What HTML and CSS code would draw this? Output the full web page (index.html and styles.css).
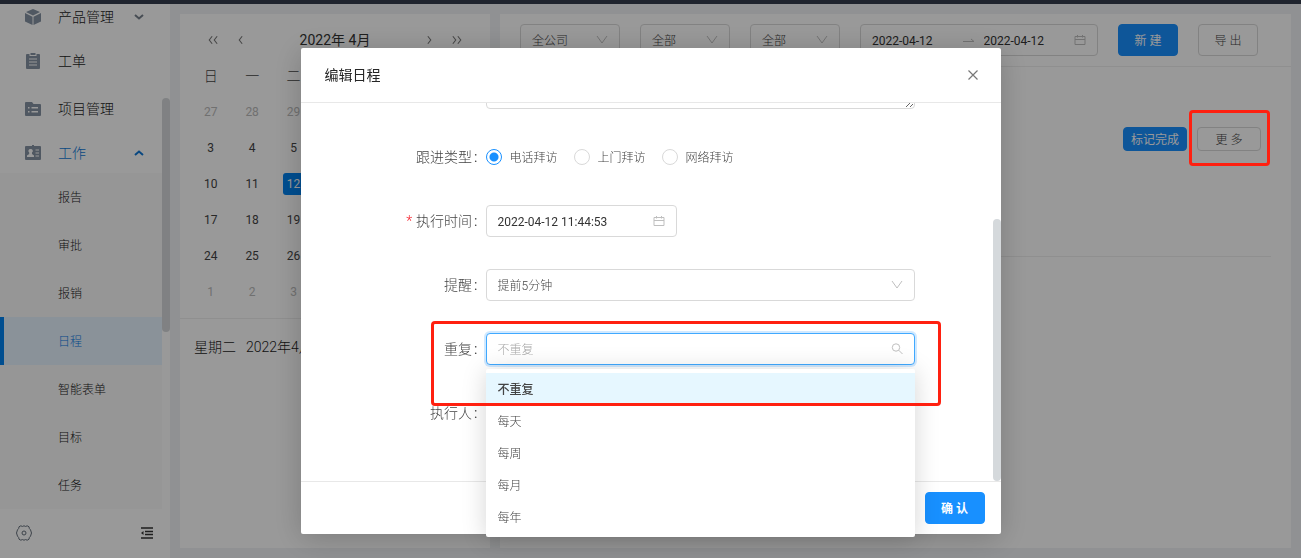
FILE: index.html
```html
<!DOCTYPE html>
<html lang="zh-CN">
<head>
<meta charset="utf-8">
<title>编辑日程</title>
<link rel="stylesheet" href="styles.css">
</head>
<body>
<svg class="defs" aria-hidden="true">
  <symbol id="down" viewBox="0 0 12 12"><path d="M1 2l5 7 5-7" fill="none" stroke="currentColor"/></symbol>
  <symbol id="calendar" viewBox="0 0 12 12"><path d="M1 2.500h10v8H1zM1 5.500h10M3.500 1v2.500M8.500 1v2.500" fill="none" stroke="currentColor"/></symbol>
  <symbol id="left" viewBox="0 0 6 10"><path d="M5 .5L1.500 5 5 9.500" fill="none" stroke="currentColor" stroke-width="1.300"/></symbol>
  <symbol id="right" viewBox="0 0 6 10"><path d="M1 .5L4.500 5 1 9.500" fill="none" stroke="currentColor" stroke-width="1.300"/></symbol>
</svg>
<div class="app">
  <header class="topbar"></header>
  <div class="layout">
    <aside class="sidebar">
      <div class="menu-area">
        <nav class="menu">
          <a class="menu-title" href="#">
            <svg class="menu-icon" viewBox="0 0 16 16"><path d="M8 0l7 3-7 3.500L1 3zM0 4l7.500 3.700V16L0 12.500zM16 4L8.500 7.700V16l7.500-3.500z" fill="currentColor"/></svg>
            <span>产品管理</span>
            <svg class="caret" viewBox="0 0 10 6"><path d="M1 1l4 3.500L9 1" fill="none" stroke="currentColor" stroke-width="2"/></svg>
          </a>
          <a class="menu-item" href="#">
            <svg class="menu-icon" viewBox="0 0 16 16"><path fill-rule="evenodd" d="M2 1h2.500v2h7V1H14q1 0 1 1v13q0 1-1 1H2q-1 0-1-1V2q0-1 1-1zM4 5.500v1h8v-1zm0 3v1h8v-1zm0 3v1h8v-1zM5.500 0h5v2h-5z" fill="currentColor"/></svg>
            <span>工单</span>
          </a>
          <a class="menu-item" href="#">
            <svg class="menu-icon" viewBox="0 0 16 16"><path fill-rule="evenodd" d="M1 1h6l1.500 2H15q1 0 1 1v10q0 1-1 1H1q-1 0-1-1V2q0-1 1-1zM3 6v1.500h1.500V6zm3.500 0v1.500H13V6zM3 10v1.500h1.500V10zm3.500 0v1.500H13V10z" fill="currentColor"/></svg>
            <span>项目管理</span>
          </a>
          <a class="menu-title open" href="#">
            <svg class="menu-icon" viewBox="0 0 16 16"><path fill-rule="evenodd" d="M1 1h6V0h2v1h6q1 0 1 1v12q0 1-1 1H1q-1 0-1-1V2q0-1 1-1zm4.500 3a2 2 0 0 0-1.300 3.600V9L2 10.500V12h7v-1.500L7 9V7.600A2 2 0 0 0 5.500 4zM10.500 4.500v1H14v-1zm0 3v1H14v-1zm0 3v1H14v-1z" fill="currentColor"/></svg>
            <span>工作</span>
            <svg class="caret" viewBox="0 0 10 6"><path d="M1 5l4-3.500L9 5" fill="none" stroke="currentColor" stroke-width="2"/></svg>
          </a>
          <div class="submenu">
            <a href="#">报告</a>
            <a href="#">审批</a>
            <a href="#">报销</a>
            <a class="active" href="#">日程</a>
            <a href="#">智能表单</a>
            <a href="#">目标</a>
            <a href="#">任务</a>
          </div>
        </nav>
        <div class="rail"><div class="thumb"></div></div>
      </div>
      <div class="sidebar-foot">
        <button aria-label="设置"><svg width="16" height="16" viewBox="0 0 16 16" fill="none" stroke="#66707c"><path d="M4.800.8q1.600 1.300 3.200 0 1.600 1.300 3.200 0l1.800 1q0 2 1.500 3l1 3.200-1 3.200q-1.500 1-1.500 3l-1.800 1q-1.600-1.300-3.200 0-1.600-1.300-3.200 0l-1.800-1q0-2-1.500-3L.5 8l1-3.200q1.500-1 1.500-3z"/><circle cx="8" cy="8" r="2"/></svg></button>
        <button aria-label="收起菜单"><svg width="14" height="12" viewBox="0 0 14 12"><path d="M1 1h12M5 4.500h8M5 7.500h8M1 11h12" stroke="#333" stroke-width="1.300"/><path d="M3.500 4v4L1 6z" fill="#333"/></svg></button>
      </div>
    </aside>
    <main class="content">
      <section class="calendar card">
        <div class="cal-head">
          <button aria-label="上一年"><svg><use href="#left"/></svg><svg><use href="#left"/></svg></button>
          <button aria-label="上个月"><svg><use href="#left"/></svg></button>
          <h2>2022年 4月</h2>
          <button aria-label="下个月"><svg><use href="#right"/></svg></button>
          <button aria-label="下一年"><svg><use href="#right"/></svg><svg><use href="#right"/></svg></button>
        </div>
        <table class="days">
          <thead><tr><th>日</th><th>一</th><th>二</th><th>三</th><th>四</th><th>五</th><th>六</th></tr></thead>
          <tbody>
            <tr class="muted"><td>27</td><td>28</td><td>29</td><td>30</td><td>31</td><td>1</td><td>2</td></tr>
            <tr><td>3</td><td>4</td><td>5</td><td>6</td><td>7</td><td>8</td><td>9</td></tr>
            <tr><td>10</td><td>11</td><td><span class="today">12<i class="badge"></i></span></td><td>13</td><td>14</td><td>15</td><td>16</td></tr>
            <tr><td>17</td><td>18</td><td>19</td><td>20</td><td>21</td><td>22</td><td>23</td></tr>
            <tr><td>24</td><td>25</td><td>26</td><td>27</td><td>28</td><td>29</td><td>30</td></tr>
            <tr class="muted"><td>1</td><td>2</td><td>3</td><td>4</td><td>5</td><td>6</td><td>7</td></tr>
          </tbody>
        </table>
        <p class="cal-date"><span>星期二</span><span>2022年4月12日</span></p>
      </section>
      <section class="schedule card">
        <div class="toolbar">
          <div class="picker wide"><select aria-label="公司"><option>全公司</option></select><svg><use href="#down"/></svg></div>
          <div class="picker"><select aria-label="类型"><option>全部</option></select><svg><use href="#down"/></svg></div>
          <div class="picker"><select aria-label="状态"><option>全部</option></select><svg><use href="#down"/></svg></div>
          <div class="picker range">
            <input aria-label="开始日期" value="2022-04-12">
            <svg viewBox="0 0 12 12"><path d="M0 7.500h11L8 5" fill="none" stroke="currentColor"/></svg>
            <input aria-label="结束日期" value="2022-04-12">
            <svg><use href="#calendar"/></svg>
          </div>
          <button class="btn primary">新 建</button>
          <button class="btn">导 出</button>
        </div>
        <div class="entry">
          <button class="btn primary small">标记完成</button>
          <button class="btn small">更 多</button>
        </div>
      </section>
    </main>
  </div>
</div>
<div class="mask">
  <div class="modal" role="dialog" aria-labelledby="dialog-title">
    <header class="modal-head">
      <h1 id="dialog-title">编辑日程</h1>
      <button aria-label="关闭"><svg width="10" height="10" viewBox="0 0 10 10"><path d="M.5.5l9 9M9.500.5l-9 9" stroke="currentColor" stroke-width="1.200"/></svg></button>
    </header>
    <div class="modal-body">
      <form class="form">
        <div class="row"><span class="label"></span><textarea class="field" aria-label="日程内容"></textarea></div>
        <div class="row"><span class="label">跟进类型<b>:</b></span>
          <div class="field radios">
            <label><input type="radio" name="kind" checked><span>电话拜访</span></label>
            <label><input type="radio" name="kind"><span>上门拜访</span></label>
            <label><input type="radio" name="kind"><span>网络拜访</span></label>
          </div>
        </div>
        <div class="row"><label class="label required" for="time">执行时间<b>:</b></label>
          <div class="field"><div class="picker time"><input id="time" value="2022-04-12 11:44:53"><svg><use href="#calendar"/></svg></div></div>
        </div>
        <div class="row"><label class="label" for="remind">提醒<b>:</b></label>
          <div class="field picker"><select id="remind"><option>提前5分钟</option></select><svg><use href="#down"/></svg></div>
        </div>
        <div class="row"><label class="label" for="repeat">重复<b>:</b></label>
          <div class="field picker focused"><input id="repeat" role="combobox" aria-expanded="true" aria-controls="repeat-list" placeholder="不重复"><svg viewBox="0 0 12 12" fill="none" stroke="currentColor"><circle cx="5" cy="4.500" r="3.700"/><path d="M7.700 7.200l3.800 3.800"/></svg></div>
        </div>
        <div class="row"><span class="label">执行人<b>:</b></span><div class="field"></div></div>
      </form>
      <div class="rail"><div class="thumb"></div></div>
    </div>
    <footer class="modal-foot"><button class="btn primary strong">确 认</button></footer>
    <ul class="dropdown" id="repeat-list" role="listbox">
      <li role="option" aria-selected="true">不重复</li>
      <li role="option">每天</li>
      <li role="option">每周</li>
      <li role="option">每月</li>
      <li role="option">每年</li>
    </ul>
    <div class="highlight repeat-mark"></div>
  </div>
</div>
<div class="highlight more-mark"></div>
</body>
</html>
```
FILE: styles.css
```css
* { box-sizing: border-box; }
body {
  margin: 0;
  font: 300 12px/20px Roboto, "Noto Sans CJK SC", sans-serif;
  color: #444;
  overflow: hidden;
}
h1, h2, p, ul { margin: 0; padding: 0; }
button, input, select, textarea { font: inherit; color: inherit; }
button { border: 0; background: none; padding: 0; cursor: pointer; }
a { color: inherit; text-decoration: none; }
.defs { position: absolute; width: 0; height: 0; }

.app { display: flex; flex-direction: column; height: 100vh; background: #f0f2f5; }
.topbar { flex: none; height: 4px; background: #353d4e; }
.layout { display: flex; flex: 1; min-height: 0; }

.sidebar { display: flex; flex-direction: column; width: 170px; background: #fff; }
.menu-area { display: flex; flex: 1; min-height: 0; }
.menu { flex: 1; display: flex; flex-direction: column; justify-content: flex-end; overflow: hidden; }
.menu-title, .menu-item {
  display: flex; flex: none; align-items: center;
  height: 48px; padding: 0 18px 0 25px; gap: 17px;
  font-size: 14px; color: #222;
}
.menu-title { height: 40px; }
.menu-icon { width: 16px; height: 16px; color: #8593a3; }
.caret { width: 10px; height: 6px; margin-left: auto; color: #77818c; }
.open, .open .caret { color: #1078d8; }
.submenu { flex: none; background: #fafafa; }
.submenu a { display: flex; align-items: center; height: 48px; padding: 2px 0 0 58px; color: #222; }
.submenu .active { padding-left: 54px; border-left: 4px solid #0082f0; background: #e6f3ff; color: #0a7ae6; }
.rail { flex: none; width: 8px; }
.thumb { border-radius: 4px; }
.menu-area .thumb { height: 234px; margin-top: 94px; background: #d5d8db; }
.sidebar-foot { display: flex; flex: none; align-items: center; justify-content: space-between; height: 49px; padding: 0 16px 2px; }
.sidebar-foot svg { display: block; }

.content { display: flex; flex: 1; gap: 10px; padding: 10px; min-width: 0; }
.card { background: #fff; }
.calendar { width: 310px; flex: none; }
.cal-head { display: flex; align-items: center; height: 43px; padding: 9px 28px 0; gap: 20px; }
.cal-head h2 { flex: 1; text-align: center; font-size: 14px; font-weight: 400; color: #333; }
.cal-head button { display: flex; color: #777; }
.cal-head svg { width: 5px; height: 10px; }
.days { width: 290px; margin: 0 10px; table-layout: fixed; border-collapse: collapse; text-align: center; font-weight: 400; color: #444; }
.days th, .days td { height: 36px; padding: 2px 0 0; }
.days th { font-size: 14px; font-weight: 300; color: #444; }
.days .muted { color: #bbb; }
.today { display: block; position: relative; width: 22px; margin: auto; line-height: 22px; border-radius: 3px; background: #0082f0; color: #fff; }
.badge { position: absolute; top: -4px; right: -4px; width: 8px; height: 8px; border-radius: 50%; background: #f5222d; }
.cal-date { display: flex; gap: 10px; margin-top: 9px; padding: 18px 14px; border-top: 1px solid #eee; font-size: 14px; color: #222; }

.schedule { flex: 1; min-width: 0; }
.toolbar { display: flex; gap: 20px; padding: 10px 20px; height: 53px; border-bottom: 1px solid #eee; }
.picker {
  display: flex; align-items: center; width: 90px; height: 32px; padding: 0 11px;
  border: 1px solid #d9d9d9; border-radius: 4px; background: #fff;
}
.picker select, .picker input { flex: 1; min-width: 0; padding: 2px 0 0; border: 0; outline: 0; background: none; appearance: none; }
.picker svg { flex: none; width: 12px; height: 12px; color: #bfbfbf; }
.picker.wide { width: 100px; }
.picker.range { width: 238px; gap: 9px; color: #333; }
.picker input { font-weight: 400; }
.btn { height: 32px; padding: 2px 16px 0; border: 1px solid #d9d9d9; border-radius: 4px; background: #fff; color: #444; white-space: nowrap; }
.toolbar .btn { width: 60px; padding: 2px 0 0; }
.btn.primary { border-color: #1890ff; background: #1890ff; color: #fff; font-weight: 400; }
.btn.strong { width: 60px; padding: 2px 0 0; font-weight: 700; }
.entry { display: flex; justify-content: flex-end; gap: 10px; height: 190px; margin: 0 20px; padding: 60px 10px; border-bottom: 1px solid #eee; }
.btn.small { width: 64px; height: 24px; padding: 2px 0 0; line-height: 20px; }

.mask { position: fixed; inset: 0; padding-top: 48px; background: rgba(0, 0, 0, .4); }
.modal { position: relative; width: 700px; margin: 0 auto; border-radius: 2px; background: #fff; box-shadow: 0 4px 30px rgba(0, 0, 0, .2); }
.modal-head { display: flex; align-items: center; justify-content: space-between; height: 55px; padding: 0 23px 0 24px; border-bottom: 1px solid #e8e8e8; }
.modal-head h1 { font-size: 14px; font-weight: 400; color: #262626; }
.modal-head button { display: flex; color: #777; }
.modal-body { display: flex; height: calc(100vh - 180px); overflow: hidden; }
.form { flex: 1; display: flex; flex-direction: column; justify-content: flex-end; gap: 32px; padding: 0 24px 52px; }
.row { display: flex; flex: none; align-items: center; min-height: 32px; }
.label { width: 25%; padding-right: 8px; text-align: right; font-size: 14px; color: #444; }
.label b { margin-left: 2px; font-weight: 400; }
.required::before { content: "*"; margin-right: 4px; color: #f5222d; }
.field, .field.picker { width: 66.66%; }
textarea.field { height: 54px; border: 1px solid #d9d9d9; border-radius: 4px; resize: vertical; }
.radios { display: flex; gap: 16px; }
.radios label { display: flex; align-items: center; gap: 8px; }
.radios span { padding-top: 2px; }
.radios input { appearance: none; width: 16px; height: 16px; margin: 0; border: 1px solid #d9d9d9; border-radius: 50%; }
.radios input:checked { border-color: #1890ff; background: radial-gradient(circle, #1890ff 4px, #fff 5px); }
.picker.time { width: 191px; color: #333; }
.focused { border-color: #40a9ff; box-shadow: 0 0 0 2px rgba(24, 144, 255, .2); }
.focused input::placeholder { color: #aaa; font-weight: 300; }
.modal .modal-body .thumb { height: 262px; margin-top: 116px; background: #d5d9dc; }
.modal-foot { display: flex; justify-content: flex-end; padding: 10px 16px; border-top: 1px solid #e8e8e8; }
.dropdown { position: absolute; left: 185px; top: 321px; width: 429px; padding: 4px 0; list-style: none; border-radius: 2px; background: #fff; box-shadow: 0 2px 24px rgba(0, 0, 0, .17); }
.dropdown li { padding: 7px 12px 5px; }
.dropdown li[aria-selected] { background: #e6f7ff; font-weight: 500; }
.highlight { position: absolute; border: 3px solid #ff2010; border-radius: 4px; pointer-events: none; }
.repeat-mark { left: 130px; top: 273px; width: 510px; height: 85px; }
.more-mark { right: 31px; top: 110px; width: 81px; height: 56px; }
```
